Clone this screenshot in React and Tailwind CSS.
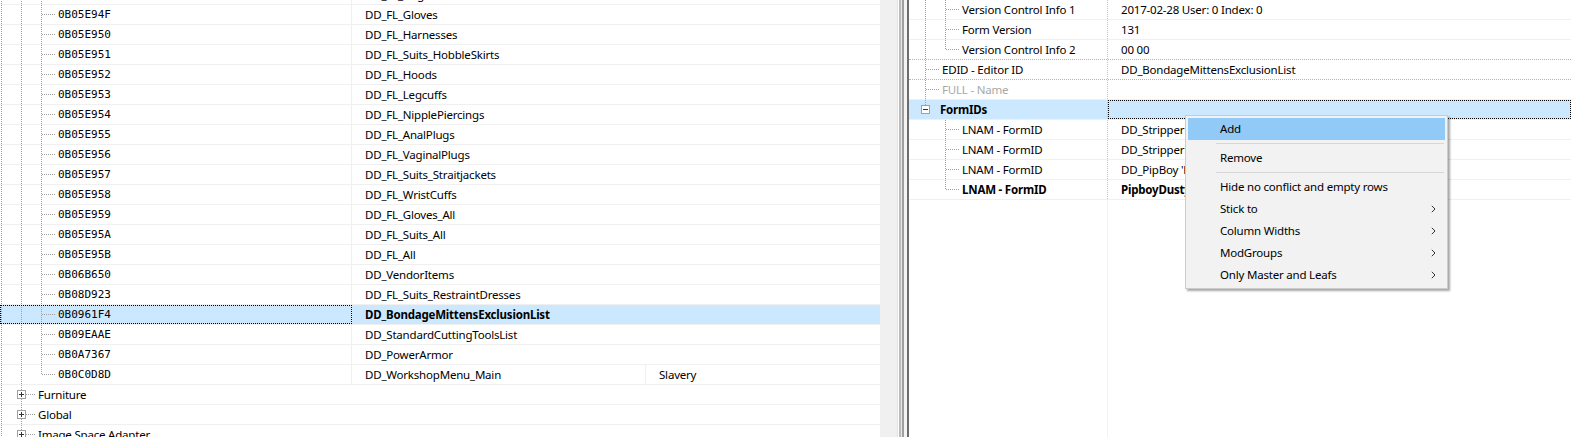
import React from 'react';

const leftRows = [
  { hex: '0B05E94E', name: 'DD_FL_Gags' },
  { hex: '0B05E94F', name: 'DD_FL_Gloves' },
  { hex: '0B05E950', name: 'DD_FL_Harnesses' },
  { hex: '0B05E951', name: 'DD_FL_Suits_HobbleSkirts' },
  { hex: '0B05E952', name: 'DD_FL_Hoods' },
  { hex: '0B05E953', name: 'DD_FL_Legcuffs' },
  { hex: '0B05E954', name: 'DD_FL_NipplePiercings' },
  { hex: '0B05E955', name: 'DD_FL_AnalPlugs' },
  { hex: '0B05E956', name: 'DD_FL_VaginalPlugs' },
  { hex: '0B05E957', name: 'DD_FL_Suits_Straitjackets' },
  { hex: '0B05E958', name: 'DD_FL_WristCuffs' },
  { hex: '0B05E959', name: 'DD_FL_Gloves_All' },
  { hex: '0B05E95A', name: 'DD_FL_Suits_All' },
  { hex: '0B05E95B', name: 'DD_FL_All' },
  { hex: '0B06B650', name: 'DD_VendorItems' },
  { hex: '0B08D923', name: 'DD_FL_Suits_RestraintDresses' },
  { hex: '0B0961F4', name: 'DD_BondageMittensExclusionList', selected: true },
  { hex: '0B09EAAE', name: 'DD_StandardCuttingToolsList' },
  { hex: '0B0A7367', name: 'DD_PowerArmor' },
  { hex: '0B0C0D8D', name: 'DD_WorkshopMenu_Main', extra: 'Slavery', last: true },
];

const groups = ['Furniture', 'Global', 'Image Space Adapter'];

const menuItems = [
  { label: 'Add', active: true, sepAfter: true },
  { label: 'Remove', sepAfter: true },
  { label: 'Hide no conflict and empty rows' },
  { label: 'Stick to', sub: true },
  { label: 'Column Widths', sub: true },
  { label: 'ModGroups', sub: true },
  { label: 'Only Master and Leafs', sub: true },
];

const dots = { stroke: '#a0a0a0', strokeWidth: 1, strokeDasharray: '1 1' };

// dotted tree guide for a record row inside a group
function LeafGuide({ last }) {
  return (
    <svg width="58" height="20" className="block shrink-0 self-start" shapeRendering="crispEdges">
      <line x1="1.5" y1="0" x2="1.5" y2="20" {...dots} />
      <line x1="21.5" y1="0" x2="21.5" y2="20" {...dots} />
      <line x1="41.5" y1="0" x2="41.5" y2={last ? 10 : 20} {...dots} />
      <line x1="42" y1="9.5" x2="56" y2="9.5" {...dots} />
    </svg>
  );
}

function PlusBox({ x, minus }) {
  return (
    <>
      <rect x={x + 0.5} y="5.5" width="8" height="8" fill="#fff" stroke="#a0a0a0" />
      <line x1={x + 2} y1="9.5" x2={x + 7} y2="9.5" stroke="#333" />
      {!minus && <line x1={x + 4.5} y1="7" x2={x + 4.5} y2="12" stroke="#333" />}
    </>
  );
}

function GroupGuide() {
  return (
    <svg width="38" height="20" className="block shrink-0 self-start" shapeRendering="crispEdges">
      <line x1="1.5" y1="0" x2="1.5" y2="20" {...dots} />
      <line x1="21.5" y1="0" x2="21.5" y2="20" {...dots} />
      <line x1="26" y1="9.5" x2="36" y2="9.5" {...dots} />
      <PlusBox x={17} />
    </svg>
  );
}

function LeftRow({ row }) {
  return (
    <div className={`flex h-[20px] shrink-0 border-b border-[#f0f0f0] ${row.selected ? 'bg-[#cce8ff]' : ''}`}>
      <div className={`flex w-[352px] shrink-0 items-center border-r border-[#f0f0f0] ${row.selected ? 'outline-1 -outline-offset-1 outline-dotted outline-black' : ''}`}>
        <LeafGuide last={row.last} />
        <span className="font-['DejaVu_Sans_Mono',monospace] text-[11px] tracking-normal text-black">{row.hex}</span>
      </div>
      <div
        className={`flex w-[294px] shrink-0 items-center pl-[13px] ${row.selected ? 'font-bold' : ''} ${row.extra ? 'border-r border-[#f0f0f0]' : ''}`}
      >
        {row.name}
      </div>
      <div className="flex flex-1 items-center pl-[13px]">{row.extra}</div>
    </div>
  );
}

function GroupRow({ label }) {
  return (
    <div className="flex h-[20px] shrink-0 items-center border-b border-[#f0f0f0]">
      <GroupGuide />
      <span>{label}</span>
    </div>
  );
}

// right tree: kind = 'sub' | 'subLast' | 'top' | 'group' | 'child' | 'childLast'
function RightGuide({ kind }) {
  const sub = kind === 'sub' || kind === 'subLast';
  const child = kind === 'child' || kind === 'childLast';
  const w = kind === 'group' ? 31 : kind === 'top' ? 33 : 53;
  return (
    <svg width={w} height="20" className="block shrink-0 self-start" shapeRendering="crispEdges">
      {(sub || kind === 'top') && <line x1="16.5" y1="0" x2="16.5" y2="20" {...dots} />}
      {kind === 'top' && <line x1="17" y1="9.5" x2="31" y2="9.5" {...dots} />}
      {kind === 'group' && (
        <>
          <line x1="16.5" y1="0" x2="16.5" y2="5" {...dots} />
          <PlusBox x={12} minus />
        </>
      )}
      {(sub || child) && (
        <>
          <line x1="36.5" y1="0" x2="36.5" y2={kind === 'subLast' || kind === 'childLast' ? 10 : 20} {...dots} />
          <line x1="37" y1="9.5" x2="51" y2="9.5" {...dots} />
        </>
      )}
    </svg>
  );
}

const rightRows = [
  { kind: 'sub', name: 'Version Control Info 1', value: '2017-02-28 User: 0 Index: 0' },
  { kind: 'sub', name: 'Form Version', value: '131' },
  { kind: 'subLast', name: 'Version Control Info 2', value: '00 00', dotted: true },
  { kind: 'top', name: 'EDID - Editor ID', value: 'DD_BondageMittensExclusionList', dotted: true },
  { kind: 'top', name: 'FULL - Name', value: '', muted: true },
  { kind: 'group', name: 'FormIDs', value: '', bold: true, selected: true },
  { kind: 'child', name: 'LNAM - FormID', value: 'DD_Stripper "Stripper" [NPC_:0B0B3C21]' },
  { kind: 'child', name: 'LNAM - FormID', value: 'DD_StripperRobot "Stripper" [NPC_:0B0B3C22]' },
  { kind: 'child', name: 'LNAM - FormID', value: "DD_PipBoy 'Pip-Boy' [ARMO:0B0A1F10]" },
  { kind: 'childLast', name: 'LNAM - FormID', value: 'PipboyDusty "Pip-Boy" [ARMO:00065E65]', bold: true },
];

function RightRow({ row }) {
  const line = row.dotted ? 'border-dotted border-[#b4b4b4]' : 'border-[#f0f0f0]';
  return (
    <div className={`flex h-[20px] shrink-0 border-b ${line} ${row.selected ? 'bg-[#cce8ff]' : ''}`}>
      <div
        className={`flex w-[199px] shrink-0 items-center border-r border-dotted border-r-[#c4c4c4] ${row.bold ? 'font-bold' : ''} ${row.muted ? 'text-[#a8a8a8]' : ''}`}
      >
        <RightGuide kind={row.kind} />
        <span className="whitespace-nowrap">{row.name}</span>
      </div>
      <div
        className={`flex flex-1 items-center whitespace-nowrap pl-[13px] ${row.bold && !row.selected ? 'font-bold' : ''} ${row.selected ? 'outline-1 -outline-offset-1 outline-dotted outline-black' : ''}`}
      >
        {row.value}
      </div>
    </div>
  );
}

function Chevron() {
  return (
    <svg width="5" height="8" className="block" shapeRendering="geometricPrecision">
      <path d="M0.8 0.8 L4 4 L0.8 7.2" fill="none" stroke="#333" strokeWidth="1" />
    </svg>
  );
}

function ContextMenu() {
  return (
    <div className="absolute left-[276px] top-[115px] w-[263px] border border-[#cccccc] bg-[#f2f2f2] p-[2px] shadow-[2px_2px_2px_rgba(0,0,0,0.35)]">
      {menuItems.map((item) => (
        <div key={item.label}>
          <div className={`flex h-[22px] items-center justify-between pl-[32px] pr-[9px] ${item.active ? 'bg-[#91c9f7]' : ''}`}>
            <span>{item.label}</span>
            {item.sub && <Chevron />}
          </div>
          {item.sepAfter && (
            <div className="flex h-[7px] items-center pl-[28px] pr-[1px]">
              <div className="h-px flex-1 bg-[#d7d7d7]" />
            </div>
          )}
        </div>
      ))}
    </div>
  );
}

export default function App() {
  return (
    <div className="flex h-[437px] w-[1571px] overflow-hidden bg-white font-['Noto_Sans',sans-serif] text-[11.5px] leading-none tracking-[-0.2px] text-black">
      {/* record list */}
      <div className="flex w-[880px] shrink-0 flex-col overflow-hidden">
        <div className="-mt-[15px] flex flex-col">
          {leftRows.map((row) => (
            <LeftRow key={row.hex} row={row} />
          ))}
          {groups.map((g) => (
            <GroupRow key={g} label={g} />
          ))}
        </div>
      </div>

      {/* splitter */}
      <div className="flex shrink-0">
        <div className="w-[17px] bg-[#f0f0f0]" />
        <div className="w-px bg-[#e3e3e3]" />
        <div className="w-px bg-white" />
        <div className="w-[2px] bg-[#bcbcbc]" />
        <div className="w-px bg-[#e8e8e8]" />
        <div className="w-[2px] bg-[#a0a0a0]" />
        <div className="w-[3px] bg-[#f4f4f4]" />
        <div className="w-[2px] bg-[#6d6d6d]" />
      </div>

      {/* record view */}
      <div className="relative flex flex-1 flex-col overflow-hidden">
        {rightRows.map((row, i) => (
          <RightRow key={i} row={row} />
        ))}
        <div className="flex flex-1">
          <div className="w-[199px] border-r border-[#f2f2f2]" />
        </div>
        <ContextMenu />
      </div>
    </div>
  );
}
